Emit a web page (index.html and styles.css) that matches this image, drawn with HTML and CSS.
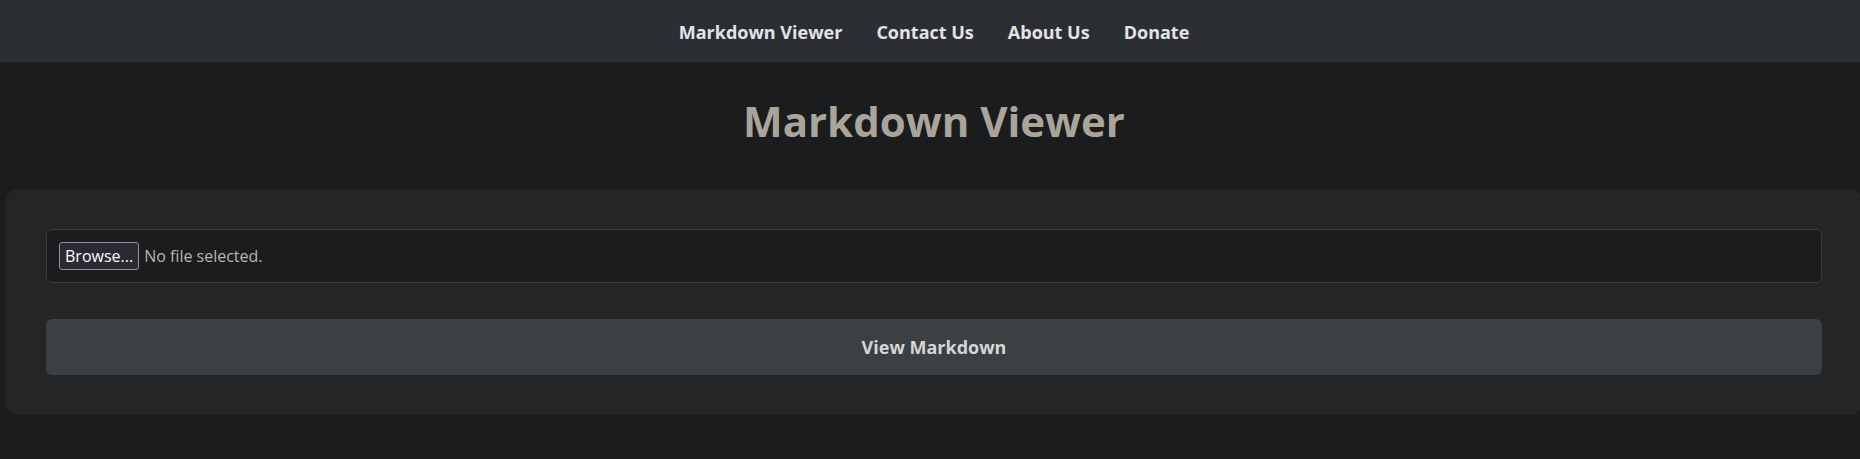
FILE: index.html
```html
<!DOCTYPE html>
<html lang="en">
<head>
<meta charset="utf-8">
<title>Markdown Viewer</title>
<link rel="stylesheet" href="styles.css">
</head>
<body>
<nav class="topnav">
  <a class="nav-link" href="#">Markdown Viewer</a>
  <a class="nav-link" href="#">Contact Us</a>
  <a class="nav-link" href="#">About Us</a>
  <a class="nav-link" href="#">Donate</a>
</nav>
<h1 class="page-title">Markdown Viewer</h1>
<section class="card">
  <label class="file-field">
    <span class="file-btn">Browse...</span>
    <span class="file-name">No file selected.</span>
  </label>
  <button class="view-btn" type="button">View Markdown</button>
</section>
</body>
</html>
```

FILE: styles.css
```css
html {
  margin: 0;
  padding: 0;
  background: #1b1c1e;
  overflow: hidden;
}
body {
  margin: 0;
  padding: 0;
  width: 1868px;
  font-family: "Open Sans", "Noto Sans", sans-serif;
  color: #d8d4cd;
}
.topnav {
  height: 62px;
  background: #2b2e32;
  display: flex;
  justify-content: center;
  align-items: center;
  gap: 34px;
}
.nav-link {
  color: #e3e3e6;
  text-decoration: none;
  font-weight: 700;
  font-size: 18px;
  line-height: 24px;
  padding-top: 1px;
}
.page-title {
  margin: 30px 0 40px;
  text-align: center;
  font-size: 42px;
  line-height: 57px;
  font-weight: 700;
  color: #aaa49b;
}
.card {
  margin: 0 6px;
  padding: 40px;
  background: #242527;
  border-radius: 12px;
  display: flex;
  flex-direction: column;
  gap: 36px;
}
.file-field {
  display: flex;
  align-items: center;
  gap: 5px;
  padding: 12px;
  border: 1px solid #3b3c3f;
  border-radius: 6px;
  background: #1b1c1e;
}
.file-btn {
  box-sizing: border-box;
  height: 28px;
  padding: 0 5px;
  display: flex;
  align-items: center;
  border: 1px solid #8f8f9d;
  border-radius: 3px;
  background: #2b2a33;
  color: #fbfbfe;
  font-size: 16px;
}
.file-name {
  color: #bbb6ad;
  font-size: 16px;
}
.view-btn {
  height: 56px;
  border: none;
  border-radius: 6px;
  background: #3b4043;
  color: #d6d6d6;
  font-family: "Open Sans", "Noto Sans", sans-serif;
  font-weight: 700;
  font-size: 18px;
}
```
